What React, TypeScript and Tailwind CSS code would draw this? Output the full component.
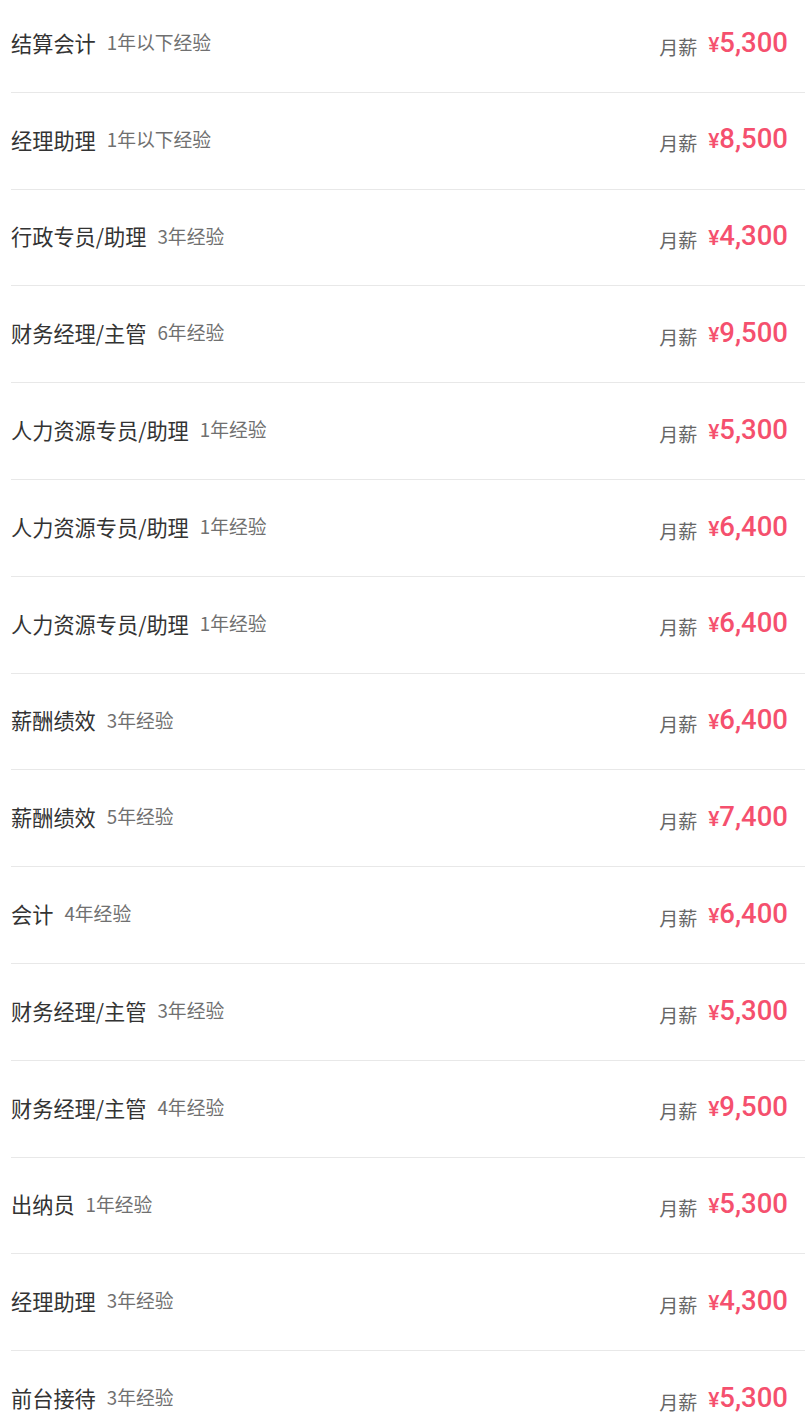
import { FC } from "react";

interface Job {
  title: string;
  exp: string;
  salary: string;
}

const jobs: Job[] = [
  { title: "结算会计", exp: "1年以下经验", salary: "5,300" },
  { title: "经理助理", exp: "1年以下经验", salary: "8,500" },
  { title: "行政专员/助理", exp: "3年经验", salary: "4,300" },
  { title: "财务经理/主管", exp: "6年经验", salary: "9,500" },
  { title: "人力资源专员/助理", exp: "1年经验", salary: "5,300" },
  { title: "人力资源专员/助理", exp: "1年经验", salary: "6,400" },
  { title: "人力资源专员/助理", exp: "1年经验", salary: "6,400" },
  { title: "薪酬绩效", exp: "3年经验", salary: "6,400" },
  { title: "薪酬绩效", exp: "5年经验", salary: "7,400" },
  { title: "会计", exp: "4年经验", salary: "6,400" },
  { title: "财务经理/主管", exp: "3年经验", salary: "5,300" },
  { title: "财务经理/主管", exp: "4年经验", salary: "9,500" },
  { title: "出纳员", exp: "1年经验", salary: "5,300" },
  { title: "经理助理", exp: "3年经验", salary: "4,300" },
  { title: "前台接待", exp: "3年经验", salary: "5,300" },
];

const cjk = { fontFamily: '"Noto Sans CJK SC", "Noto Sans", sans-serif' };

const JobRow: FC<{ job: Job }> = ({ job }) => (
  <div className="ml-[11px] h-[96.8px] pb-[3px] flex items-center justify-between border-b border-[#e8e8e8] pr-[17px]">
    <div className="flex items-center" style={cjk}>
      <span className="text-[21.2px] text-[#333333] leading-none">{job.title}</span>
      <span className="ml-[11px] text-[18.8px] text-[#707070] leading-none">{job.exp}</span>
    </div>
    <div className="flex items-baseline">
      <span className="text-[19px] text-[#666666] leading-none mr-[11px] translate-y-[3px]" style={cjk}>
        月薪
      </span>
      <span className="text-[#f5506e] leading-none font-medium font-[Roboto,sans-serif]">
        <span className="text-[21px]">¥</span>
        <span className="text-[27.5px]">{job.salary}</span>
      </span>
    </div>
  </div>
);

const App: FC = () => {
  return (
    <div className="w-[805px] h-[1428px] overflow-hidden bg-white">
      <div className="-mt-[4px]">
        {jobs.map((job, i) => (
          <JobRow key={i} job={job} />
        ))}
      </div>
    </div>
  );
};

export default App;
